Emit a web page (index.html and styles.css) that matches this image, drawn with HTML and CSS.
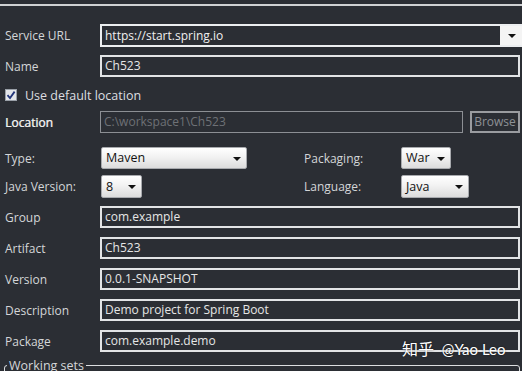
FILE: index.html
```html
<!DOCTYPE html>
<html lang="en">
<head>
    <meta charset="UTF-8">
    <title>New Spring Starter Project</title>
    <link rel="stylesheet" href="styles.css">
</head>
<body>
    <div class="header-line"></div>
    <form class="wizard">
        <div class="row row-url">
            <span class="label">Service URL</span>
            <div class="combo-edit">
                <span class="value">https://start.spring.io</span>
                <span class="combo-btn"></span>
            </div>
        </div>

        <div class="row row-name">
            <span class="label">Name</span>
            <div class="field">Ch523</div>
        </div>

        <div class="row row-check">
            <span class="checkbox">
                <svg width="12" height="12" viewBox="0 0 12 12">
                    <rect x="0.5" y="0.5" width="11" height="11" fill="#e4e6ea" stroke="#9aa0a8"/>
                    <path d="M2.5 6.2 L5 9 L9.6 2.6" fill="none" stroke="#22357a" stroke-width="1.8"/>
                </svg>
            </span>
            <span class="check-text">Use default location</span>
        </div>

        <div class="row row-location">
            <span class="label label-bold">Location</span>
            <div class="field field-disabled">C:\workspace1\Ch523</div>
            <span class="button-disabled">Browse</span>
        </div>

        <div class="options">
            <span class="label">Type:</span>
            <span class="cell"><span class="dropdown dd-type">Maven</span></span>
            <span class="label">Packaging:</span>
            <span class="cell"><span class="dropdown dd-packaging">War</span></span>

            <span class="label">Java Version:</span>
            <span class="cell"><span class="dropdown dd-java">8</span></span>
            <span class="label">Language:</span>
            <span class="cell"><span class="dropdown dd-language">Java</span></span>
        </div>

        <div class="row row-first">
            <span class="label">Group</span>
            <div class="field">com.example</div>
        </div>
        <div class="row">
            <span class="label">Artifact</span>
            <div class="field">Ch523</div>
        </div>
        <div class="row">
            <span class="label">Version</span>
            <div class="field">0.0.1-SNAPSHOT</div>
        </div>
        <div class="row">
            <span class="label">Description</span>
            <div class="field">Demo project for Spring Boot</div>
        </div>
        <div class="row">
            <span class="label">Package</span>
            <div class="field">com.example.demo</div>
        </div>

        <fieldset class="working-sets">
            <legend>Working sets</legend>
        </fieldset>
    </form>

    <div class="watermark"><span class="wm-cn">知乎</span> @Yao Leo</div>
</body>
</html>
```

FILE: styles.css
```css
/* Eclipse dark theme, Spring starter wizard */
body {
    margin: 0;
    width: 522px;
    height: 371px;
    overflow: hidden;
    position: relative;
    background-color: #2b2e34;
    color: #d4d6d8;
    font-family: 'Open Sans', 'Noto Sans', sans-serif;
    font-size: 12px;
}
.header-line {
    height: 2px;
    margin-top: 4px;
    background-color: #cfd1d3;
}
.wizard {
    padding: 0 2px 0 5px;
}
.row {
    display: flex;
    align-items: center;
    height: 22px;
    margin-top: 9px;
}
.label {
    width: 95px;
    flex: none;
    white-space: nowrap;
}
.label-bold {
    color: #eeeeee;
    text-shadow: 0.5px 0 0 #d0d0d0;
}
.field {
    flex: 1;
    height: 22px;
    box-sizing: border-box;
    border: 2px solid #e2e4e6;
    padding: 0 3px;
    line-height: 18px;
    color: #e6e6e6;
    white-space: nowrap;
    overflow: hidden;
}
.row-url {
    margin-top: 18px;
    height: 23px;
    margin-right: -2px;
}
.row-name {
    margin-top: 8px;
}
.combo-edit {
    flex: 1;
    display: flex;
    height: 23px;
    box-sizing: border-box;
    border: 2px solid #eceef0;
    border-right: none;
}
.combo-edit .value {
    flex: 1;
    padding: 0 3px;
    line-height: 19px;
    color: #f0f0f0;
}
.combo-btn {
    width: 22px;
    background-color: #f4f4f4;
    position: relative;
}
.combo-btn::after {
    content: "";
    position: absolute;
    left: 8px;
    top: 8px;
    border-left: 4px solid transparent;
    border-right: 4px solid transparent;
    border-top: 4px solid #111111;
}
.row-check {
    margin-top: 10px;
    height: 16px;
}
.checkbox {
    display: flex;
    width: 20px;
    flex: none;
}
.check-text {
    font-size: 12.5px;
    color: #dcdee0;
}
.row-location {
    margin-top: 8px;
    height: 22px;
}
.field-disabled {
    border: 1px solid #8c8f94;
    line-height: 20px;
    color: #6e7176;
}
.button-disabled {
    flex: none;
    width: 50px;
    height: 22px;
    margin-left: 7px;
    box-sizing: border-box;
    border: 2px solid #9a9ca0;
    text-align: center;
    line-height: 18px;
    color: #8e9196;
}
.options {
    display: grid;
    grid-template-columns: 96px 203px 97px 1fr;
    grid-template-rows: 22px 23px;
    row-gap: 6px;
    align-items: center;
    margin-top: 14px;
}
.cell {
    display: flex;
}
.dropdown {
    position: relative;
    height: 100%;
    box-sizing: border-box;
    padding: 0 0 0 4px;
    border: 1px solid #a8aaae;
    border-radius: 2px;
    background: linear-gradient(#ffffff, #f2f2f2 45%, #dcdcdc);
    color: #111111;
    font-size: 12.5px;
}
.dd-type { width: 146px; height: 22px; line-height: 20px; }
.dd-packaging { width: 50px; height: 22px; line-height: 20px; }
.dd-java { width: 41px; height: 23px; line-height: 21px; }
.dd-language { width: 68px; height: 23px; line-height: 21px; }
.dropdown::after {
    content: "";
    position: absolute;
    right: 5px;
    top: 9px;
    border-left: 4px solid transparent;
    border-right: 4px solid transparent;
    border-top: 4px solid #111111;
}
.row-first {
    margin-top: 8px;
}
.working-sets {
    margin: 5px 0 0 -1px;
    padding: 0;
    height: 20px;
    border: 1px solid #dcdee0;
    border-radius: 3px;
}
.working-sets legend {
    padding: 0 2px;
    margin-left: 2px;
    font-size: 12.5px;
    color: #d4d6d8;
}
.watermark {
    position: absolute;
    left: 402px;
    top: 336px;
    color: #ffffff;
    font-family: 'Lato', 'Noto Sans CJK SC', sans-serif;
    font-size: 15px;
    text-shadow: 0 0 2px rgba(0, 0, 0, 0.6);
}
.wm-cn {
    font-family: 'Noto Sans CJK SC', sans-serif;
    font-size: 16px;
    margin-right: 4px;
}
```
